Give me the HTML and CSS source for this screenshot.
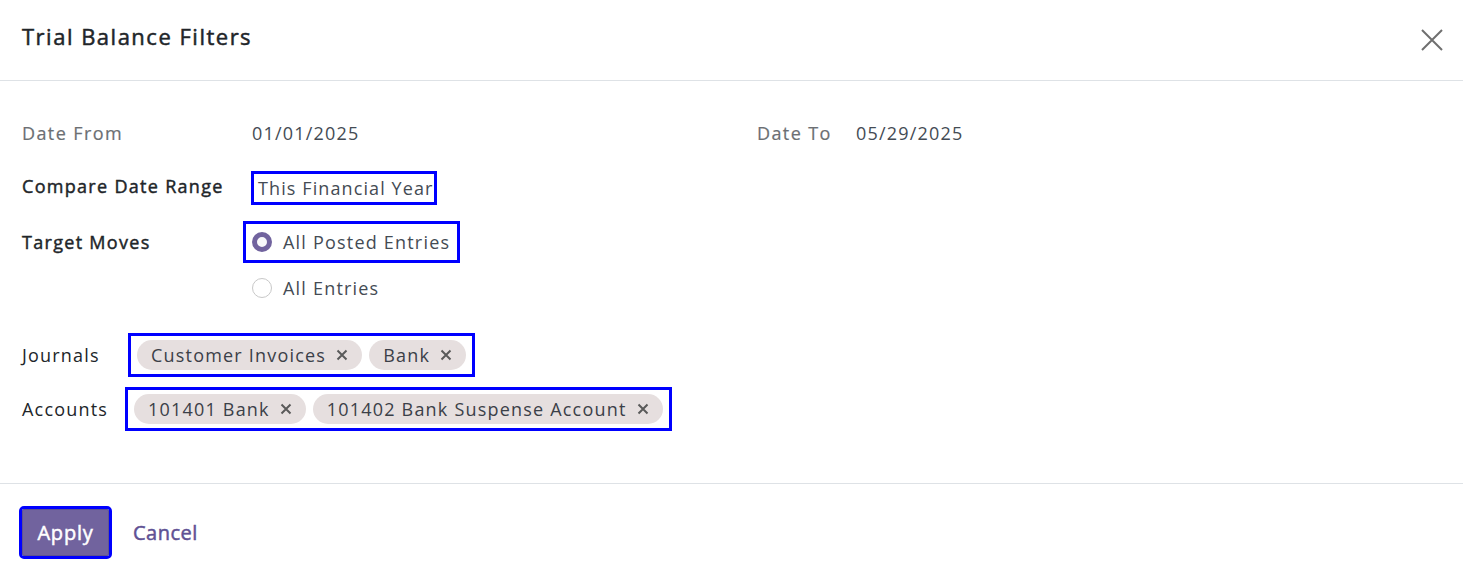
FILE: index.html
```html
<!DOCTYPE html>
<html lang="en">
<head>
<meta charset="utf-8">
<title>Trial Balance Filters</title>
<link rel="stylesheet" href="styles.css">
</head>
<body>
<div class="modal">
  <header class="modal-header">
    <h4 class="modal-title">Trial Balance Filters</h4>
    <button class="btn-close" aria-label="Close">
      <svg width="22" height="22" viewBox="0 0 22 22"><path d="M1 1L21 21M21 1L1 21" stroke="#6f6f6f" stroke-width="2" fill="none"/></svg>
    </button>
  </header>
  <main class="modal-body">
    <div class="row row-dates">
      <div class="half">
        <span class="label muted">Date From</span>
        <span class="value">01/01/2025</span>
      </div>
      <div class="half half-right">
        <span class="label label-short muted">Date To</span>
        <span class="value">05/29/2025</span>
      </div>
    </div>
    <div class="row row-compare">
      <span class="label strong">Compare Date Range</span>
      <span class="value boxed compare">This Financial Year</span>
    </div>
    <div class="row row-target">
      <span class="label strong">Target Moves</span>
      <label class="radio boxed checked-wrap"><span class="radio-dot checked"></span>All Posted Entries</label>
    </div>
    <div class="row row-all">
      <span class="label"></span>
      <label class="radio plain"><span class="radio-dot"></span>All Entries</label>
    </div>
    <div class="row row-journals">
      <span class="label label-tags">Journals</span>
      <div class="tags boxed">
        <span class="tag">Customer Invoices<svg class="x" width="12" height="12" viewBox="0 0 12 12"><path d="M1.5 1.5L10.5 10.5M10.5 1.5L1.5 10.5"/></svg></span>
        <span class="tag">Bank<svg class="x" width="12" height="12" viewBox="0 0 12 12"><path d="M1.5 1.5L10.5 10.5M10.5 1.5L1.5 10.5"/></svg></span>
      </div>
    </div>
    <div class="row row-accounts">
      <span class="label label-tags label-acc">Accounts</span>
      <div class="tags boxed">
        <span class="tag">101401 Bank<svg class="x" width="12" height="12" viewBox="0 0 12 12"><path d="M1.5 1.5L10.5 10.5M10.5 1.5L1.5 10.5"/></svg></span>
        <span class="tag">101402 Bank Suspense Account<svg class="x" width="12" height="12" viewBox="0 0 12 12"><path d="M1.5 1.5L10.5 10.5M10.5 1.5L1.5 10.5"/></svg></span>
      </div>
    </div>
  </main>
  <footer class="modal-footer">
    <button class="btn-primary boxed">Apply</button>
    <button class="btn-link">Cancel</button>
  </footer>
</div>
</body>
</html>
```
FILE: styles.css
```css
* { box-sizing: border-box; }
html, body { margin: 0; padding: 0; background: #fff; }
body {
  font-family: "Open Sans", "Noto Sans", sans-serif;
  font-size: 18px;
  letter-spacing: 1.2px;
  color: #444b54;
  width: 1463px;
  height: 577px;
  overflow: hidden;
}
.modal { display: flex; flex-direction: column; height: 577px; }
.modal-header {
  height: 81px;
  border-bottom: 1px solid #dee2e6;
  display: flex;
  align-items: center;
  justify-content: space-between;
  padding: 0 20px 8px 22px;
}
.modal-title {
  margin: 0;
  font-size: 22px;
  font-weight: 400;
  -webkit-text-stroke: 0.5px #212529;
  letter-spacing: 1.5px;
  color: #212529;
}
.btn-close {
  border: 0;
  background: none;
  padding: 0;
  width: 22px;
  height: 22px;
  display: flex;
  margin-top: 8px;
}
.modal-body {
  padding: 32px 22px 0;
  height: 403px;
  border-bottom: 1px solid #dee2e6;
}
.row { display: flex; align-items: center; }
.label { width: 230px; flex: none; }
.label-short { width: 99px; }
.muted { color: #6c6f73; -webkit-text-stroke: 0.2px #6c6f73; letter-spacing: 1.4px; }
.strong { color: #212529; -webkit-text-stroke: 0.45px #212529; letter-spacing: 1.3px; }
.value { color: #444b54; }
.boxed { outline: 3px solid #0000ff; }
.row-dates { height: 40px; }
.half { display: flex; align-items: center; width: 735px; }
.half-right { width: auto; }
.row-compare { height: 42px; margin-top: 12px; }
.compare { padding: 0 1px 0 4px; height: 28px; line-height: 28px; margin-left: 2px; margin-top: 4px; letter-spacing: 1.1px; }
.row-target { height: 42px; margin-top: 14px; }
.row-all { height: 36px; margin-top: 7px; }
.radio { display: flex; align-items: center; color: #444b54; }
.checked-wrap { height: 36px; padding: 0 7px 0 6px; margin-left: -6px; }
.plain { margin-left: 0; }
.radio-dot {
  width: 20px; height: 20px; border-radius: 50%;
  border: 1px solid #c8c8c8;
  margin-right: 11px;
  flex: none;
  background: #fff;
}
.radio-dot.checked {
  border: 5.5px solid #71639e;
  background: #f8f8fa;
}
.row-journals { height: 47px; margin-top: 25px; }
.row-accounts { height: 48px; margin-top: 7px; }
.label-tags { width: 109px; color: #212529; }
.label-acc { width: 106px; }
.tags {
  display: flex;
  gap: 7px;
  padding: 4px 6px 4px 6px;
  align-items: center;
}
.tag {
  display: flex;
  align-items: center;
  background: #e6dfdf;
  color: #3b4048;
  border-radius: 15px;
  height: 30px;
  padding: 0 14px 0 14px;
  white-space: nowrap;
}
.x { margin-left: 10px; stroke: #5a5a5a; stroke-width: 2; fill: none; }
.modal-footer {
  flex: 1;
  display: flex;
  align-items: center;
  padding: 4px 22px 0;
  gap: 24px;
}
.btn-primary {
  font-family: inherit;
  background: #71639e;
  color: #fff;
  -webkit-text-stroke: 0.5px #fff;
  border: 1px solid #5f5390;
  font-size: 20px;
  letter-spacing: 0.8px;
  width: 87px;
  height: 47px;
  border-radius: 2px;
  padding: 0;
}
.btn-link {
  font-family: inherit;
  background: none;
  border: 0;
  color: #5f5194;
  -webkit-text-stroke: 0.5px #5f5194;
  font-size: 20px;
  letter-spacing: 0.5px;
  padding: 0;
}
```
